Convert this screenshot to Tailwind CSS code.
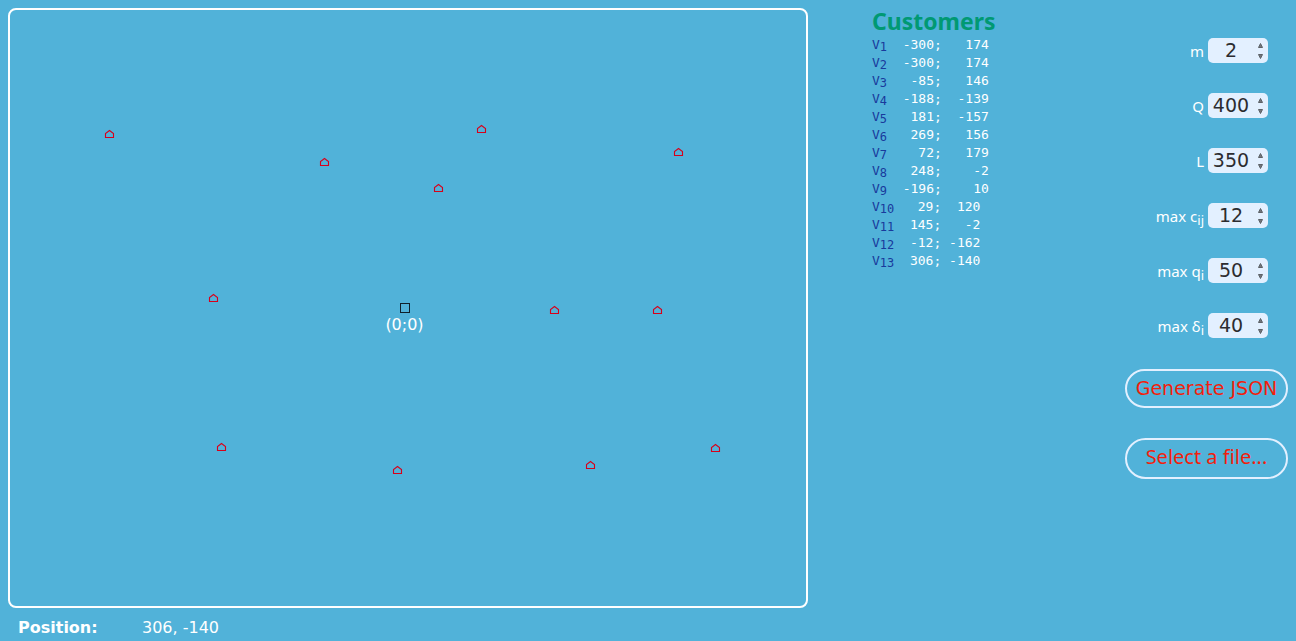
<!DOCTYPE html>
<html lang="en">
<head>
<meta charset="utf-8">
<meta name="viewport" content="width=device-width, initial-scale=1">
<title>Customers</title>
<script src="https://cdn.jsdelivr.net/npm/@tailwindcss/browser@4"></script>
</head>
<body class="flex min-h-screen items-start bg-[#51b2d9] p-2 pb-0 font-['DejaVu_Sans',sans-serif] text-white">
  <main class="w-[62.5%]">
    <div class="rounded-lg border-2 border-white">
      <svg class="block w-full" viewBox="10 10 796 596" role="img" aria-label="Customer map">
        <defs>
          <path id="house" d="M-3.5 3.5V-.5L.5-3.5L4.5-.5V3.5Z" fill="none" stroke="#d8001a" stroke-width="1.1"/>
        </defs>
        <rect x="400.5" y="303.5" width="9" height="9" fill="none" stroke="#10202a"/>
        <text x="404.5" y="330" text-anchor="middle" font-size="16" fill="white">(0;0)</text>
        <use href="#house" x="109" y="134"/>
        <use href="#house" x="324" y="162"/>
        <use href="#house" x="481" y="129"/>
        <use href="#house" x="438" y="188"/>
        <use href="#house" x="678" y="152"/>
        <use href="#house" x="213" y="298"/>
        <use href="#house" x="554" y="310"/>
        <use href="#house" x="657" y="310"/>
        <use href="#house" x="221" y="447"/>
        <use href="#house" x="397" y="470"/>
        <use href="#house" x="590" y="465"/>
        <use href="#house" x="715" y="448"/>
      </svg>
    </div>
    <dl class="mt-2 flex px-2.5 leading-6">
      <dt class="w-31 font-bold">Position:</dt>
      <dd>306, -140</dd>
    </dl>
  </main>

  <section class="ml-16 flex-1">
    <h1 class="pb-0.5 font-['Noto_Sans',sans-serif] text-[23px] leading-[26px] font-bold text-[#009973]">Customers</h1>
    <ol class="font-['DejaVu_Sans_Mono',monospace] text-[13px] leading-[18px] [&_sub]:-bottom-0.5 [&_sub]:text-[12px] [&>li]:whitespace-pre">
      <li><span class="text-[#193a9c]">V<sub>1</sub></span>  -300;   174</li>
      <li><span class="text-[#193a9c]">V<sub>2</sub></span>  -300;   174</li>
      <li><span class="text-[#193a9c]">V<sub>3</sub></span>   -85;   146</li>
      <li><span class="text-[#193a9c]">V<sub>4</sub></span>  -188;  -139</li>
      <li><span class="text-[#193a9c]">V<sub>5</sub></span>   181;  -157</li>
      <li><span class="text-[#193a9c]">V<sub>6</sub></span>   269;   156</li>
      <li><span class="text-[#193a9c]">V<sub>7</sub></span>    72;   179</li>
      <li><span class="text-[#193a9c]">V<sub>8</sub></span>   248;    -2</li>
      <li><span class="text-[#193a9c]">V<sub>9</sub></span>  -196;    10</li>
      <li><span class="text-[#193a9c]">V<sub>10</sub></span>   29;  120</li>
      <li><span class="text-[#193a9c]">V<sub>11</sub></span>  145;   -2</li>
      <li><span class="text-[#193a9c]">V<sub>12</sub></span>  -12; -162</li>
      <li><span class="text-[#193a9c]">V<sub>13</sub></span>  306; -140</li>
    </ol>
  </section>

  <form class="flex w-[163px] shrink-0 flex-col pt-[29px]">
    <div class="flex flex-col gap-[29px] pr-5 font-['Noto_Sans',sans-serif] text-[15px] [&_label]:pt-0.5 [&_sub]:text-[13px]">
      <div class="flex h-[26px] items-center justify-end gap-1">
        <label for="m">m</label>
        <div class="flex h-[25px] w-15 items-center rounded-[5px] bg-[#e3f0ff]">
          <input id="m" type="number" value="2" class="w-[46px] appearance-none text-center font-['DejaVu_Sans',sans-serif] text-[19px] leading-6 text-[#2c2c30] outline-none [-moz-appearance:textfield] [&::-webkit-inner-spin-button]:hidden">
          <svg class="h-[25px] w-3" viewBox="0 0 12 25" fill="#73777c" stroke="#5c6167" aria-hidden="true"><path d="M4.5 9.500H8.500L6.500 5.500ZM4.500 16.500H8.500L6.500 20.500Z"/></svg>
        </div>
      </div>
      <div class="flex h-[26px] items-center justify-end gap-1">
        <label for="q">Q</label>
        <div class="flex h-[25px] w-15 items-center rounded-[5px] bg-[#e3f0ff]">
          <input id="q" type="number" value="400" class="w-[46px] appearance-none text-center font-['DejaVu_Sans',sans-serif] text-[19px] leading-6 text-[#2c2c30] outline-none [-moz-appearance:textfield] [&::-webkit-inner-spin-button]:hidden">
          <svg class="h-[25px] w-3" viewBox="0 0 12 25" fill="#73777c" stroke="#5c6167" aria-hidden="true"><path d="M4.5 9.500H8.500L6.500 5.500ZM4.500 16.500H8.500L6.500 20.500Z"/></svg>
        </div>
      </div>
      <div class="flex h-[26px] items-center justify-end gap-1">
        <label for="l">L</label>
        <div class="flex h-[25px] w-15 items-center rounded-[5px] bg-[#e3f0ff]">
          <input id="l" type="number" value="350" class="w-[46px] appearance-none text-center font-['DejaVu_Sans',sans-serif] text-[19px] leading-6 text-[#2c2c30] outline-none [-moz-appearance:textfield] [&::-webkit-inner-spin-button]:hidden">
          <svg class="h-[25px] w-3" viewBox="0 0 12 25" fill="#73777c" stroke="#5c6167" aria-hidden="true"><path d="M4.5 9.500H8.500L6.500 5.500ZM4.500 16.500H8.500L6.500 20.500Z"/></svg>
        </div>
      </div>
      <div class="flex h-[26px] items-center justify-end gap-1">
        <label for="c">max c<sub>ij</sub></label>
        <div class="flex h-[25px] w-15 items-center rounded-[5px] bg-[#e3f0ff]">
          <input id="c" type="number" value="12" class="w-[46px] appearance-none text-center font-['DejaVu_Sans',sans-serif] text-[19px] leading-6 text-[#2c2c30] outline-none [-moz-appearance:textfield] [&::-webkit-inner-spin-button]:hidden">
          <svg class="h-[25px] w-3" viewBox="0 0 12 25" fill="#73777c" stroke="#5c6167" aria-hidden="true"><path d="M4.5 9.500H8.500L6.500 5.500ZM4.500 16.500H8.500L6.500 20.500Z"/></svg>
        </div>
      </div>
      <div class="flex h-[26px] items-center justify-end gap-1">
        <label for="qi">max q<sub>i</sub></label>
        <div class="flex h-[25px] w-15 items-center rounded-[5px] bg-[#e3f0ff]">
          <input id="qi" type="number" value="50" class="w-[46px] appearance-none text-center font-['DejaVu_Sans',sans-serif] text-[19px] leading-6 text-[#2c2c30] outline-none [-moz-appearance:textfield] [&::-webkit-inner-spin-button]:hidden">
          <svg class="h-[25px] w-3" viewBox="0 0 12 25" fill="#73777c" stroke="#5c6167" aria-hidden="true"><path d="M4.5 9.500H8.500L6.500 5.500ZM4.500 16.500H8.500L6.500 20.500Z"/></svg>
        </div>
      </div>
      <div class="flex h-[26px] items-center justify-end gap-1">
        <label for="d">max δ<sub>i</sub></label>
        <div class="flex h-[25px] w-15 items-center rounded-[5px] bg-[#e3f0ff]">
          <input id="d" type="number" value="40" class="w-[46px] appearance-none text-center font-['DejaVu_Sans',sans-serif] text-[19px] leading-6 text-[#2c2c30] outline-none [-moz-appearance:textfield] [&::-webkit-inner-spin-button]:hidden">
          <svg class="h-[25px] w-3" viewBox="0 0 12 25" fill="#73777c" stroke="#5c6167" aria-hidden="true"><path d="M4.5 9.500H8.500L6.500 5.500ZM4.500 16.500H8.500L6.500 20.500Z"/></svg>
        </div>
      </div>
    </div>
    <button type="button" class="mt-[31px] h-[39px] rounded-full border-2 border-[#e3f0ff] text-[19px] whitespace-nowrap text-[#f21f0c]">Generate JSON</button>
    <button type="button" class="mt-[30px] h-[41px] rounded-full border-2 border-[#e3f0ff] pb-1 font-['Noto_Sans',sans-serif] text-[20px] leading-7 whitespace-nowrap text-[#f21f0c]">Select a file...</button>
  </form>
</body>
</html>
